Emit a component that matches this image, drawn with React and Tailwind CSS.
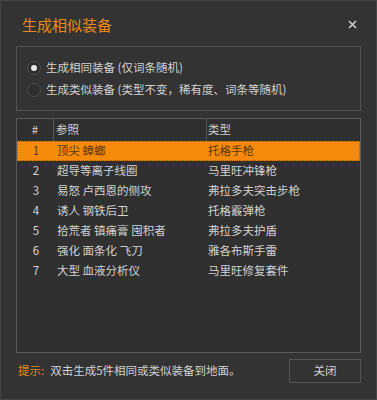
import React from 'react';

const rows = [
  ['1', '顶尖 蟑螂', '托格手枪'],
  ['2', '超导等离子线圈', '马里旺冲锋枪'],
  ['3', '易怒 卢西恩的侧攻', '弗拉多夫突击步枪'],
  ['4', '诱人 钢铁后卫', '托格霰弹枪'],
  ['5', '拾荒者 镇痛膏 囤积者', '弗拉多夫护盾'],
  ['6', '强化 面条化 飞刀', '雅各布斯手雷'],
  ['7', '大型 血液分析仪', '马里旺修复套件'],
];

const font = { fontFamily: '"Noto Sans CJK SC", "Noto Sans", sans-serif' };

const Radio = ({ checked, label }) => (
  <div className="flex items-center h-[22px] gap-[5px]">
    <div className="w-[14px] h-[14px] rounded-full border border-[#4e4e4e] bg-[#2e2e2e] flex items-center justify-center">
      {checked && <div className="w-[6px] h-[6px] rounded-full bg-[#e8e8e8]" />}
    </div>
    <span className="text-[11.5px] leading-none text-[#d2d2d2]">{label}</span>
  </div>
);

export default function App() {
  return (
    <div
      className="w-[377px] h-[400px] bg-[#333333] border border-[#454545] flex flex-col"
      style={font}
    >
      <div className="flex items-center justify-between pt-[14px] pl-[21px] pr-[19px] h-[45px]">
        <span className="text-[15px] leading-[20px] text-[#ec8a16] -mt-[12px]">生成相似装备</span>
        <svg width="9" height="9" viewBox="0 0 9 9" className="-mt-[12px]">
          <path d="M1 1 L8 8 M8 1 L1 8" stroke="#cfcfcf" strokeWidth="1.6" />
        </svg>
      </div>

      <div className="mx-[15px] h-[65px] border border-[#535353] pt-[10px] pl-[10px] flex flex-col">
        <Radio checked label="生成相同装备 (仅词条随机)" />
        <Radio label="生成类似装备 (类型不变，稀有度、词条等随机)" />
      </div>

      <div className="mx-[15px] mt-[7px] h-[235px] border border-[#5a5a5a] bg-[#303030] flex flex-col">
        <div className="flex h-[22px] text-[11.5px] text-[#cfcfcf] bg-[#2f2f2f]">
          <div className="w-[37px] border-r border-[#555] flex items-center justify-center">#</div>
          <div className="w-[153px] border-r border-[#555] flex items-center pl-[2px]">参照</div>
          <div className="flex-1 flex items-center pl-[1px]">类型</div>
        </div>
        {rows.map(([n, a, b], i) => (
          <div
            key={n}
            className={
              'flex h-[20px] text-[11.5px] items-center ' +
              (i === 0
                ? 'bg-[#f68a0a] text-[#5e3607] border border-dotted border-[#3f6fb0]'
                : 'text-[#d2d2d2] border border-transparent')
            }
          >
            <div className="w-[36px] text-center">{n}</div>
            <div className="w-[153px] pl-[3px]">{a}</div>
            <div className="flex-1 pl-[1px]">{b}</div>
          </div>
        ))}
      </div>

      <div className="flex items-center mx-[15px] mt-[6px] h-[24px]">
        <span className="text-[11.5px] text-[#e8891a] ml-[2px]">提示:</span>
        <span className="text-[11.5px] text-[#d2d2d2] ml-[6px]">双击生成5件相同或类似装备到地面。</span>
        <button
          type="button"
          className="ml-auto w-[72px] h-[24px] border border-[#555] bg-[#333] text-[11.5px] text-[#d2d2d2]"
        >
          关闭
        </button>
      </div>
    </div>
  );
}
